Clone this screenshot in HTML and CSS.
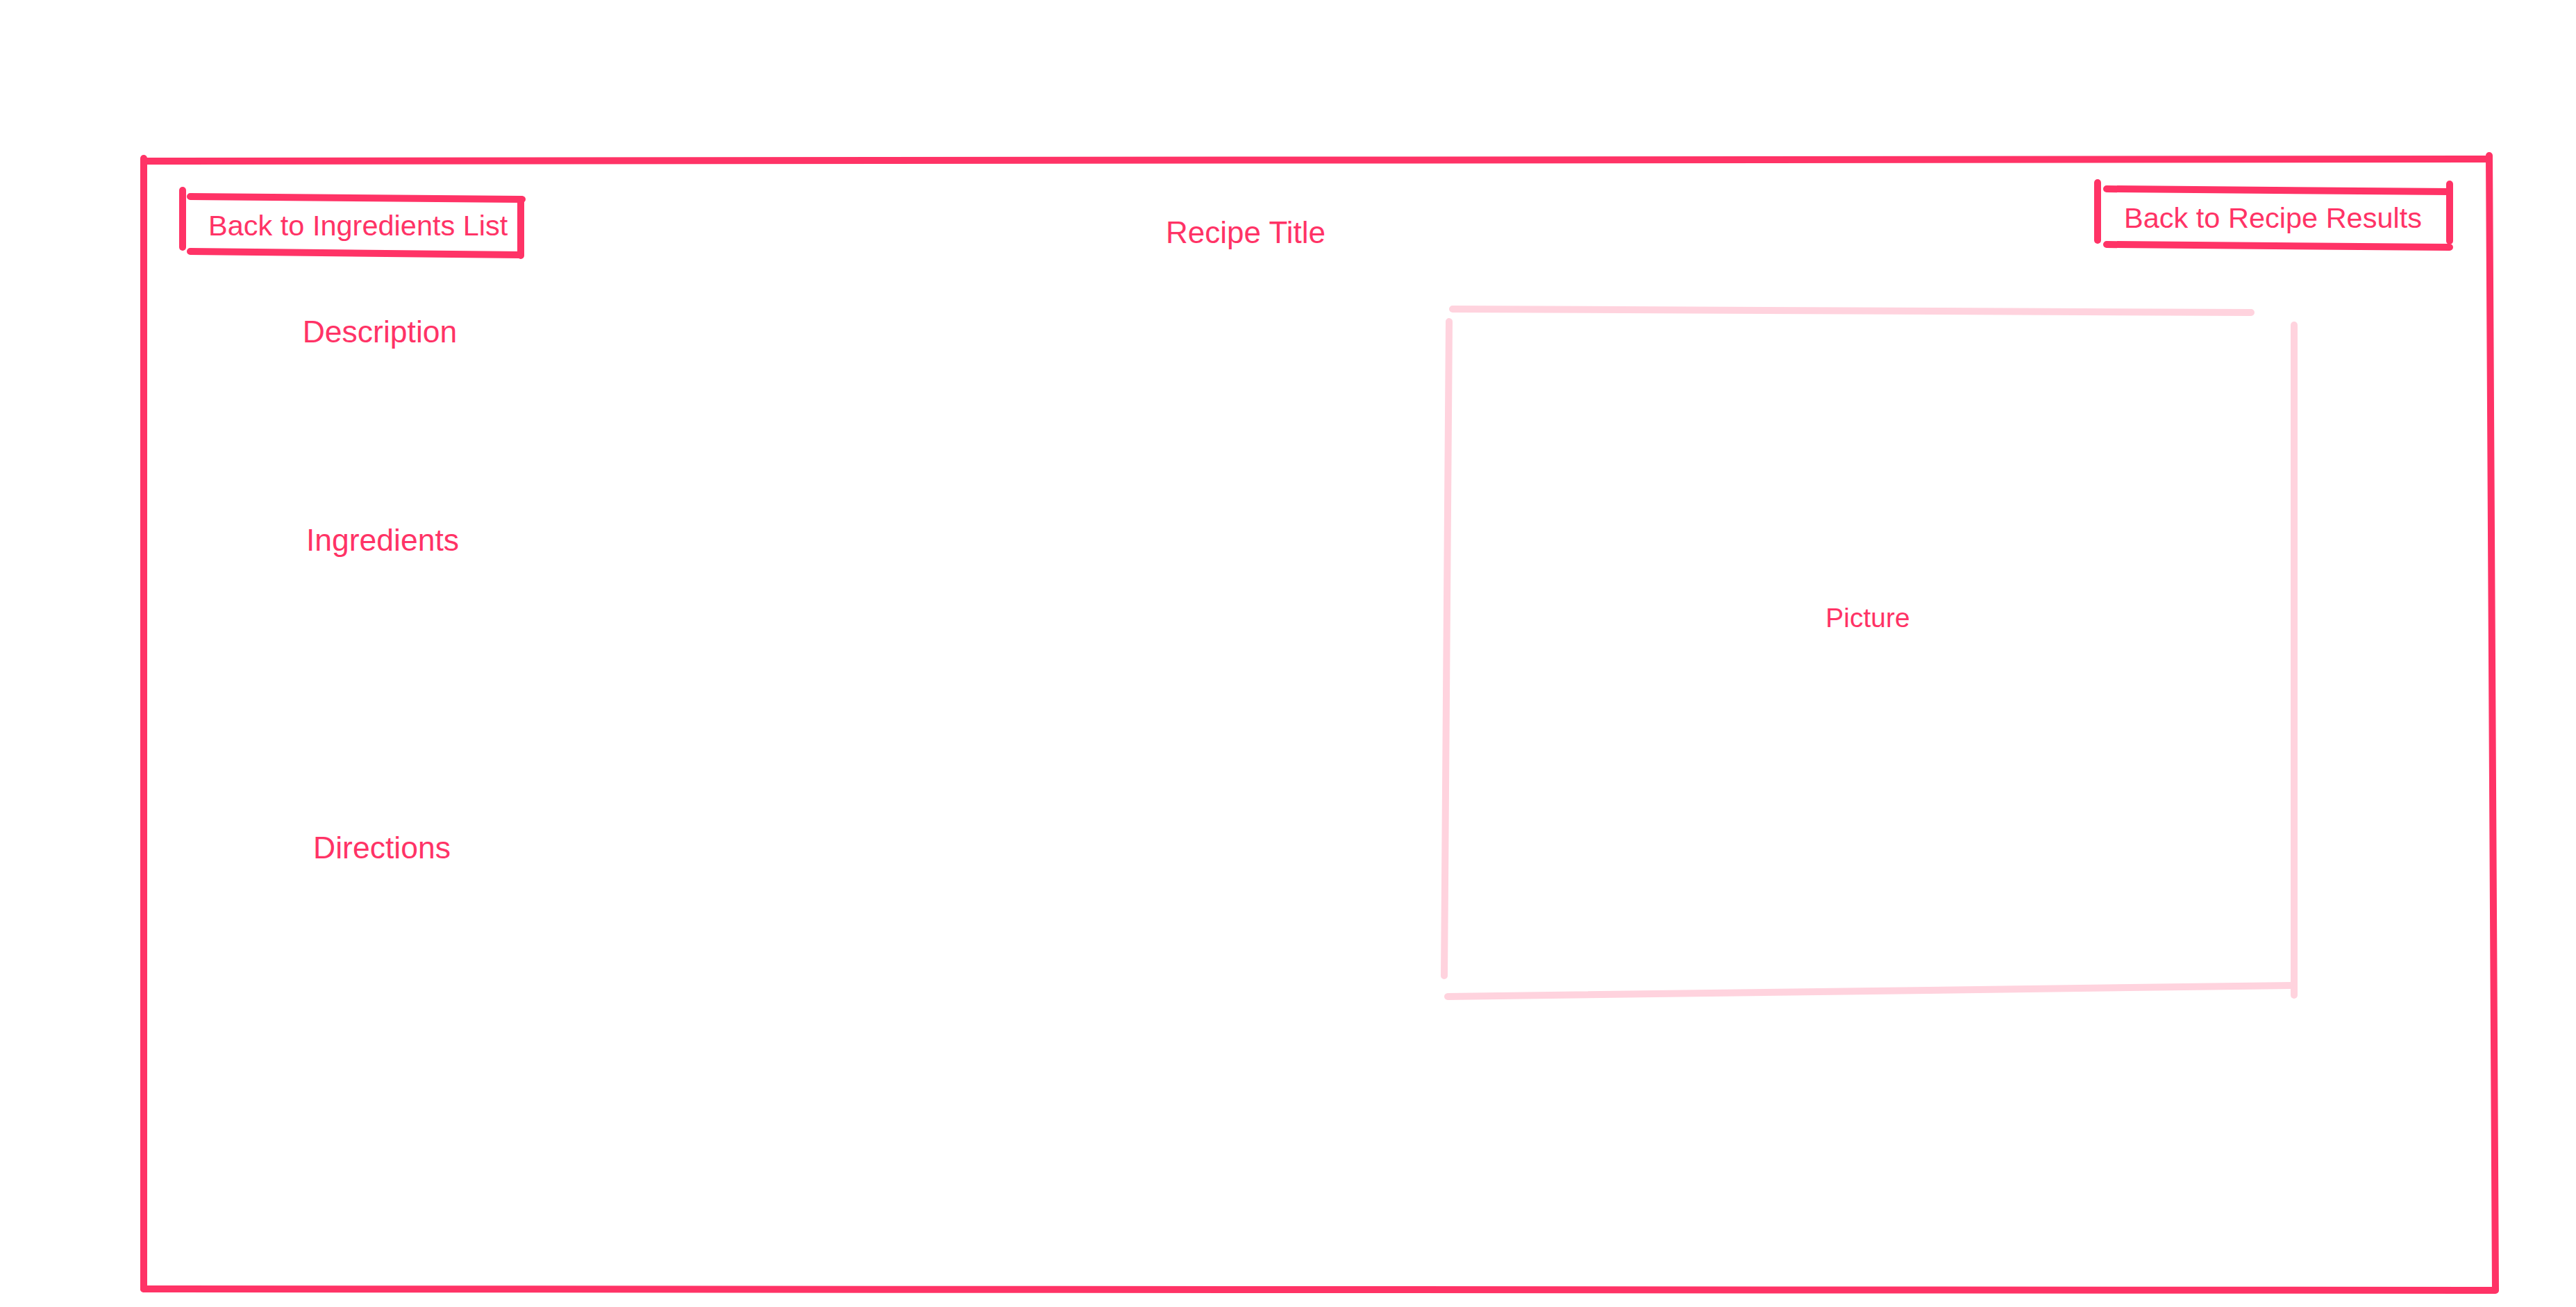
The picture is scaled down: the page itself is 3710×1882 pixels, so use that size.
FILE: index.html
```html
<!DOCTYPE html>
<html lang="en">
<head>
    <title>Recipe Page Wireframe</title>
    <link rel="stylesheet" href="styles.css">
</head>
<body>
    <div class="board">

        <!-- hand drawn strokes -->
        <svg class="sketch" width="3710" height="1882" viewBox="0 0 3710 1882">
            <g class="ink">
                <line x1="207" y1="232" x2="3585" y2="229"/>
                <line x1="3585" y1="224" x2="3594" y2="1857"/>
                <line x1="207" y1="1856" x2="3594" y2="1858"/>
                <line x1="207" y1="228" x2="207" y2="1856"/>

                <line x1="263" y1="274" x2="263" y2="356"/>
                <line x1="274" y1="283" x2="752" y2="287"/>
                <line x1="750" y1="287" x2="750" y2="368"/>
                <line x1="274" y1="362" x2="748" y2="367"/>

                <line x1="3021" y1="263" x2="3021" y2="346"/>
                <line x1="3034" y1="272" x2="3528" y2="276"/>
                <line x1="3528" y1="265" x2="3528" y2="347"/>
                <line x1="3034" y1="352" x2="3528" y2="356"/>
            </g>
            <g class="ink light">
                <line x1="2092" y1="445" x2="3242" y2="450"/>
                <line x1="2087" y1="463" x2="2080" y2="1405"/>
                <line x1="2085" y1="1435" x2="3300" y2="1419"/>
                <line x1="3304" y1="468" x2="3304" y2="1433"/>
            </g>
        </svg>

        <span class="note btn-back-ingredients">Back to Ingredients List</span>
        <span class="note title">Recipe Title</span>
        <span class="note btn-back-results">Back to Recipe Results</span>

        <span class="note label description">Description</span>
        <span class="note label ingredients">Ingredients</span>
        <span class="note label directions">Directions</span>

        <span class="note picture">Picture</span>

    </div>
</body>
</html>
```

FILE: styles.css
```css
body {
    margin: 0;
    background-color: #ffffff;
    font-family: "Liberation Sans", Arial, sans-serif;
}

.board {
    position: relative;
    width: 3710px;
    height: 1882px;
    overflow: hidden;
}

.sketch {
    position: absolute;
    left: 0;
    top: 0;
}

.ink line {
    stroke: #ff3366;
    stroke-width: 10;
    stroke-linecap: round;
}

.ink.light line {
    stroke: #ffd3de;
}

.note {
    position: absolute;
    color: #ff3366;
    line-height: 1;
    white-space: nowrap;
}

.btn-back-ingredients {
    left: 300px;
    top: 304px;
    font-size: 41.5px;
}

.btn-back-results {
    left: 3059px;
    top: 293px;
    font-size: 41.5px;
}

.title {
    left: 1594px;
    top: 313px;
    width: 400px;
    text-align: center;
    font-size: 44px;
}

.label {
    width: 400px;
    text-align: center;
    font-size: 44.5px;
}

.description {
    left: 347px;
    top: 456px;
}

.ingredients {
    left: 351px;
    top: 756px;
}

.directions {
    left: 350px;
    top: 1199px;
}

.picture {
    left: 2490px;
    top: 870px;
    width: 400px;
    text-align: center;
    font-size: 39px;
}
```
